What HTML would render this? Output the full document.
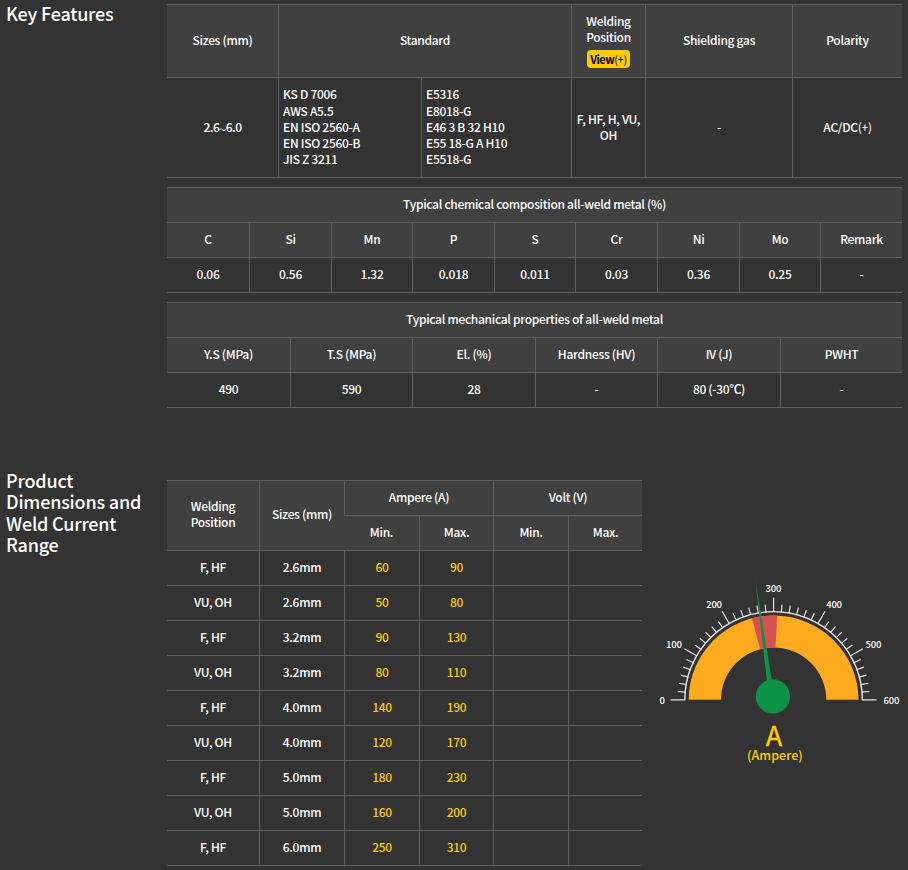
<!DOCTYPE html>
<html lang="en">
<head>
<meta charset="utf-8">
<title>Product</title>
<style>
html,body{margin:0;padding:0;background:#333;}
body{width:908px;height:870px;position:relative;overflow:hidden;color:#fff;
 font-family:"Noto Sans CJK KR","Liberation Sans",sans-serif;font-size:12px;font-weight:500;letter-spacing:-0.3px;}
h3{position:absolute;left:6px;margin:0;font-size:18px;font-weight:500;line-height:21.4px;letter-spacing:-0.2px;color:#fff;}
table{position:absolute;left:167px;border-collapse:separate;border-spacing:0;table-layout:fixed;border-top:1px solid #606060;}
th,td{border-bottom:1px solid #606060;border-left:1px solid #606060;padding:7px 0 0 0;text-align:center;vertical-align:top;font-weight:500;line-height:17px;box-sizing:border-box;overflow:hidden;}
th{background:#404040;}
tr>*:first-child{border-left:0;}
td.l{text-align:left;padding-left:4px;}
.ln{display:block;height:16px;line-height:17px;white-space:nowrap;}
.ln.x{height:17px;}
.y{color:#fc0;}
.btn{display:block;background:#fc0;color:#000;border-radius:4px;width:43px;height:18px;line-height:18px;font-size:11px;margin:6px auto 0 auto;letter-spacing:-0.3px;text-indent:0;}
.btn i{font-style:normal;font-weight:400;}
.btn b{font-weight:700;letter-spacing:-0.5px;}
tr.r35{height:35px;}
tr.h1>th{padding-top:26px;}
tr.h1>th.wp{padding-top:7px;}
tr.b1>td{padding-top:40px;}
tr.b1>td.l{padding-top:7px;}
tr.b1>td.two{padding-top:32px;}
th.two{padding-top:16px;}
th.mid{padding-top:24px;}
</style>
</head>
<body>
<h3 style="top:3px">Key Features</h3>
<table style="top:4px;width:735px">
<colgroup><col style="width:111px"><col style="width:143px"><col style="width:150px"><col style="width:74px"><col style="width:147px"><col style="width:110px"></colgroup>
<tr class="h1" style="height:73px"><th>Sizes (mm)</th><th colspan="2">Standard</th><th class="wp"><div class="ln">Welding</div><div class="ln">Position</div><span class="btn"><b>View</b><i>(+)</i></span></th><th>Shielding gas</th><th>Polarity</th></tr>
<tr class="b1" style="height:100px"><td style="letter-spacing:-0.45px">2.6<span style="position:relative;top:1.5px">~</span>6.0</td><td class="l"><div class="ln x">KS D 7006</div><div class="ln">AWS A5.5</div><div class="ln">EN ISO 2560-A</div><div class="ln">EN ISO 2560-B</div><div class="ln">JIS Z 3211</div></td><td class="l"><div class="ln x">E5316</div><div class="ln">E8018-G</div><div class="ln">E46 3 B 32 H10</div><div class="ln">E55 18-G A H10</div><div class="ln">E5518-G</div></td><td class="two"><div class="ln">F, HF, H, VU,</div><div class="ln">OH</div></td><td>-</td><td>AC/DC<span style="font-weight:400">(+)</span></td></tr>
</table>

<table style="top:187px;width:735px">
<colgroup><col style="width:82px"><col style="width:82px"><col style="width:81px"><col style="width:82px"><col style="width:81px"><col style="width:82px"><col style="width:82px"><col style="width:81px"><col style="width:82px"></colgroup>
<tr class="r35"><th colspan="9">Typical chemical composition all-weld metal (%)</th></tr>
<tr class="r35"><th>C</th><th>Si</th><th>Mn</th><th>P</th><th>S</th><th>Cr</th><th>Ni</th><th>Mo</th><th>Remark</th></tr>
<tr class="r35"><td>0.06</td><td>0.56</td><td>1.32</td><td>0.018</td><td>0.011</td><td>0.03</td><td>0.36</td><td>0.25</td><td>-</td></tr>
</table>

<table style="top:302px;width:735px">
<colgroup><col style="width:123px"><col style="width:122px"><col style="width:123px"><col style="width:122px"><col style="width:123px"><col style="width:122px"></colgroup>
<tr class="r35"><th colspan="6">Typical mechanical properties of all-weld metal</th></tr>
<tr class="r35"><th>Y.S (MPa)</th><th>T.S (MPa)</th><th>El. (%)</th><th>Hardness (HV)</th><th>IV (J)</th><th>PWHT</th></tr>
<tr class="r35"><td>490</td><td>590</td><td>28</td><td>-</td><td>80 (-30℃)</td><td>-</td></tr>
</table>

<h3 style="top:470px">Product<br>Dimensions and<br>Weld Current<br>Range</h3>
<table style="top:480px;width:475px">
<colgroup><col style="width:92px"><col style="width:85px"><col style="width:75px"><col style="width:74px"><col style="width:75px"><col style="width:74px"></colgroup>
<tr class="r35"><th rowspan="2" class="two"><div class="ln">Welding</div><div class="ln">Position</div></th><th rowspan="2" class="mid">Sizes (mm)</th><th colspan="2">Ampere (A)</th><th colspan="2">Volt (V)</th></tr>
<tr class="r35"><th>Min.</th><th>Max.</th><th>Min.</th><th>Max.</th></tr>
<tr class="r35"><td>F, HF</td><td>2.6mm</td><td class="y">60</td><td class="y">90</td><td></td><td></td></tr>
<tr class="r35"><td>VU, OH</td><td>2.6mm</td><td class="y">50</td><td class="y">80</td><td></td><td></td></tr>
<tr class="r35"><td>F, HF</td><td>3.2mm</td><td class="y">90</td><td class="y">130</td><td></td><td></td></tr>
<tr class="r35"><td>VU, OH</td><td>3.2mm</td><td class="y">80</td><td class="y">110</td><td></td><td></td></tr>
<tr class="r35"><td>F, HF</td><td>4.0mm</td><td class="y">140</td><td class="y">190</td><td></td><td></td></tr>
<tr class="r35"><td>VU, OH</td><td>4.0mm</td><td class="y">120</td><td class="y">170</td><td></td><td></td></tr>
<tr class="r35"><td>F, HF</td><td>5.0mm</td><td class="y">180</td><td class="y">230</td><td></td><td></td></tr>
<tr class="r35"><td>VU, OH</td><td>5.0mm</td><td class="y">160</td><td class="y">200</td><td></td><td></td></tr>
<tr class="r35"><td>F, HF</td><td>6.0mm</td><td class="y">250</td><td class="y">310</td><td></td><td></td></tr>
</table>
<!--G0-->
<svg style="position:absolute;left:640px;top:565px" width="268" height="215" viewBox="0 0 268 215">
<defs><clipPath id="band"><path d="M48.70 134.80A84.9 84.31 0 0 1 218.50 134.80L186.20 134.80A52.6 52.23 0 0 0 81.00 134.80Z"/></clipPath></defs>
<path d="M48.70 134.80A84.9 84.31 0 0 1 218.50 134.80L186.20 134.80A52.6 52.23 0 0 0 81.00 134.80Z" fill="#fcaa1e"/>
<path clip-path="url(#band)" d="M132.90 131.45L101.84 15.54L139.18 11.61Z" fill="#d75152"/>
<path d="M44.80 134.80A88.8 88.18 0 0 1 222.40 134.80" fill="none" stroke="#e8e8e8" stroke-width="1.4"/>
<path d="M45.30 134.80L30.60 134.80M45.64 127.16L37.77 126.47M46.64 119.57L38.86 118.21M48.31 112.11L40.68 110.08M50.63 104.81L43.20 102.13M53.57 97.74L46.41 94.43M57.13 90.96L44.40 83.66M61.27 84.51L54.80 80.01M65.96 78.44L59.91 73.40M71.16 72.80L65.58 67.25M76.84 67.63L71.76 61.62M82.95 62.98L78.42 56.55M89.45 58.87L82.10 46.22M96.28 55.33L92.94 48.22M103.40 52.41L100.70 45.03M110.75 50.11L108.70 42.53M118.27 48.45L116.90 40.72M125.90 47.45L125.22 39.64M133.60 47.12L133.60 32.52M141.30 47.45L141.98 39.64M148.93 48.45L150.30 40.72M156.45 50.11L158.50 42.53M163.80 52.41L166.50 45.03M170.92 55.33L174.26 48.22M177.75 58.87L185.10 46.22M184.25 62.98L188.78 56.55M190.36 67.63L195.44 61.62M196.04 72.80L201.62 67.25M201.24 78.44L207.29 73.40M205.93 84.51L212.40 80.01M210.07 90.96L222.80 83.66M213.63 97.74L220.79 94.43M216.57 104.81L224.00 102.13M218.89 112.11L226.52 110.08M220.56 119.57L228.34 118.21M221.56 127.16L229.43 126.47M221.90 134.80L236.60 134.80" fill="none" stroke="#e8e8e8" stroke-width="1.15"/>
<g font-size="9.5" fill="#fff" text-anchor="middle" font-weight="500" letter-spacing="-0.2">
<text x="22.1" y="138.9">0</text>
<text x="33.8" y="83.4">100</text>
<text x="74.0" y="43.2">200</text>
<text x="133.3" y="26.7">300</text>
<text x="194.0" y="43.2">400</text>
<text x="233.4" y="83.4">500</text>
<text x="251.4" y="138.9">600</text>
</g>
<path d="M115.30 15.30L128.03 125.68L133.47 124.92Z" fill="#0d9347"/>
<circle cx="132.90" cy="131.45" r="17.1" fill="#0d9347"/>
<text x="133.7" y="180.9" font-size="27" font-weight="400" fill="#fc0" stroke="#fc0" stroke-width="0.35" text-anchor="middle">A</text>
<text x="134.9" y="195.3" font-size="12.5" font-weight="500" fill="#fc0" text-anchor="middle" letter-spacing="0.03">(Ampere)</text>
</svg>
<!--G1-->
</body>
</html>
